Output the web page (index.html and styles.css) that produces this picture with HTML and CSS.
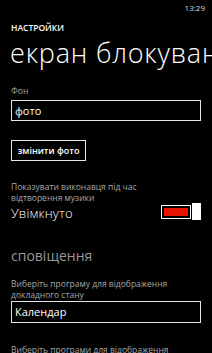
FILE: index.html
```html
<!DOCTYPE html>
<html>
<head>
<meta charset="utf-8">
<link rel="stylesheet" href="styles.css">
</head>
<body>
<div class="status"><span class="time">13:29</span></div>
<div class="app">НАСТРОЙКИ</div>
<div class="title">екран блокування</div>
<div class="content">
  <div class="label bg">Фон</div>
  <div class="textbox">фото</div>
  <div class="btn">змінити фото</div>
  <div class="label music">Показувати виконавця під час<br>відтворення музики</div>
  <div class="toggle-row">
    <div class="toggle-text">Увімкнуто</div>
    <div class="toggle">
      <div class="track"><div class="fill"></div></div>
      <div class="thumb"></div>
    </div>
  </div>
  <div class="section">сповіщення</div>
  <div class="label detail">Виберіть програму для відображення<br>докладного стану</div>
  <div class="textbox cal">Календар</div>
  <div class="label more">Виберіть програми для відображення<br>швидкого стану</div>
</div>
</body>
</html>
```
FILE: styles.css
```css
html, body {
  margin: 0;
  padding: 0;
  background: #000;
  color: #fff;
  font-family: "Open Sans", "Noto Sans", sans-serif;
  overflow: hidden;
  height: 353px;
}
.status {
  height: 16px;
  display: flex;
  justify-content: flex-end;
  padding-right: 7px;
}
.time {
  font-size: 8px;
  line-height: 15px;
  color: #ddd;
}
.app {
  margin-top: 6px;
  padding-left: 11px;
  font-size: 8.5px;
  font-weight: 600;
  line-height: 12px;
}
.title {
  margin-top: 3px;
  padding-left: 10px;
  font-size: 27px;
  letter-spacing: 0.8px;
  font-weight: 300;
  line-height: 32px;
  white-space: nowrap;
}
.content {
  padding: 0 11px;
}
.label {
  font-size: 8.5px;
  line-height: 11px;
  color: #a6a6a6;
}
.bg {
  margin-top: 16px;
}
.textbox {
  margin-top: 4px;
  height: 19px;
  border: 1px solid #e6e6e6;
  font-size: 11px;
  line-height: 19px;
  padding-left: 3px;
}
.btn {
  margin-top: 19px;
  width: 73px;
  height: 19px;
  border: 1px solid #e6e6e6;
  font-size: 9px;
  font-weight: 600;
  line-height: 19px;
  text-align: center;
}
.music {
  margin-top: 20px;
}
.toggle-row {
  display: flex;
  justify-content: space-between;
  align-items: flex-start;
}
.toggle-text {
  font-size: 13px;
  font-weight: 300;
  letter-spacing: 0.2px;
  line-height: 20px;
}
.toggle {
  display: flex;
  align-items: center;
}
.track {
  width: 24px;
  height: 8px;
  border: 1px solid #fff;
  padding: 2px;
  display: flex;
}
.fill {
  flex: 1;
  background: #e51400;
}
.thumb {
  width: 9px;
  height: 17px;
  background: #fff;
  margin-left: 1px;
}
.section {
  margin-top: 24px;
  font-size: 14px;
  line-height: 18px;
  color: #999;
}
.detail {
  margin-top: 13px;
}
.cal {
  margin-top: 1px;
  height: 20px;
  line-height: 20px;
}
.more {
  margin-top: 21px;
}
```
